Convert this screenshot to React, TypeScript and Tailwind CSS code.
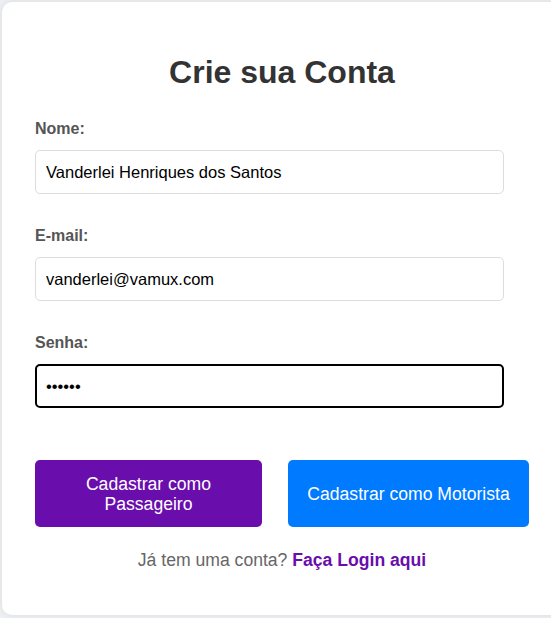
import * as React from "react";

export default function App() {
  const fields = [
    { id: "nome", label: "Nome:", type: "text", value: "Vanderlei Henriques dos Santos" },
    { id: "email", label: "E-mail:", type: "email", value: "vanderlei@vamux.com" },
  ];

  return (
    <div className="h-[618px] overflow-hidden bg-[#f0f1f5] pl-[2px] pt-[2px] font-['Liberation_Sans',Arial,sans-serif]">
      <div className="w-[560px] h-[613px] rounded-[10px] bg-white px-[33px] pt-[52px] shadow-[0_0_10px_rgba(0,0,0,0.1)]">
        <h2 className="text-center text-[32px] leading-[37px] font-bold text-[#333]">Crie sua Conta</h2>

        <form className="mt-[29px]" onSubmit={(e) => e.preventDefault()}>
          {fields.map((f) => (
            <div key={f.id} className="mb-[33px]">
              <label htmlFor={f.id} className="block mb-[12px] text-[16px] leading-[18px] font-bold text-[#555]">
                {f.label}
              </label>
              <input
                id={f.id}
                type={f.type}
                defaultValue={f.value}
                className="block w-[95%] h-[44px] rounded-[5px] border border-[#ddd] px-[10px] text-[16.5px] text-black outline-none"
              />
            </div>
          ))}

          {/* Senha (focada) */}
          <div>
            <label htmlFor="senha" className="block mb-[12px] text-[16px] leading-[18px] font-bold text-[#555]">
              Senha:
            </label>
            <input
              id="senha"
              type="password"
              defaultValue="123456"
              className="block w-[95%] h-[44px] rounded-[5px] border-2 border-black px-[9px] text-[16.5px] text-black outline-none"
            />
          </div>

          <div className="mt-[52px] grid grid-cols-[227px_241px] gap-[26px]">
            <button className="flex items-center justify-center rounded-[5px] bg-[#6a0dad] px-[20px] py-[13.5px] text-[17.6px] leading-[20px] text-white">
              Cadastrar como Passageiro
            </button>
            <button className="flex items-center justify-center rounded-[5px] bg-[#007bff] px-[8px] py-[13.5px] text-[17.6px] leading-[20px] text-white">
              Cadastrar como Motorista
            </button>
          </div>
        </form>

        <p className="mt-[23px] text-center text-[17.6px] leading-[20px] text-[#666]">
          Já tem uma conta? <a href="#" className="font-bold text-[#6a0dad]">Faça Login aqui</a>
        </p>
      </div>
    </div>
  );
}
